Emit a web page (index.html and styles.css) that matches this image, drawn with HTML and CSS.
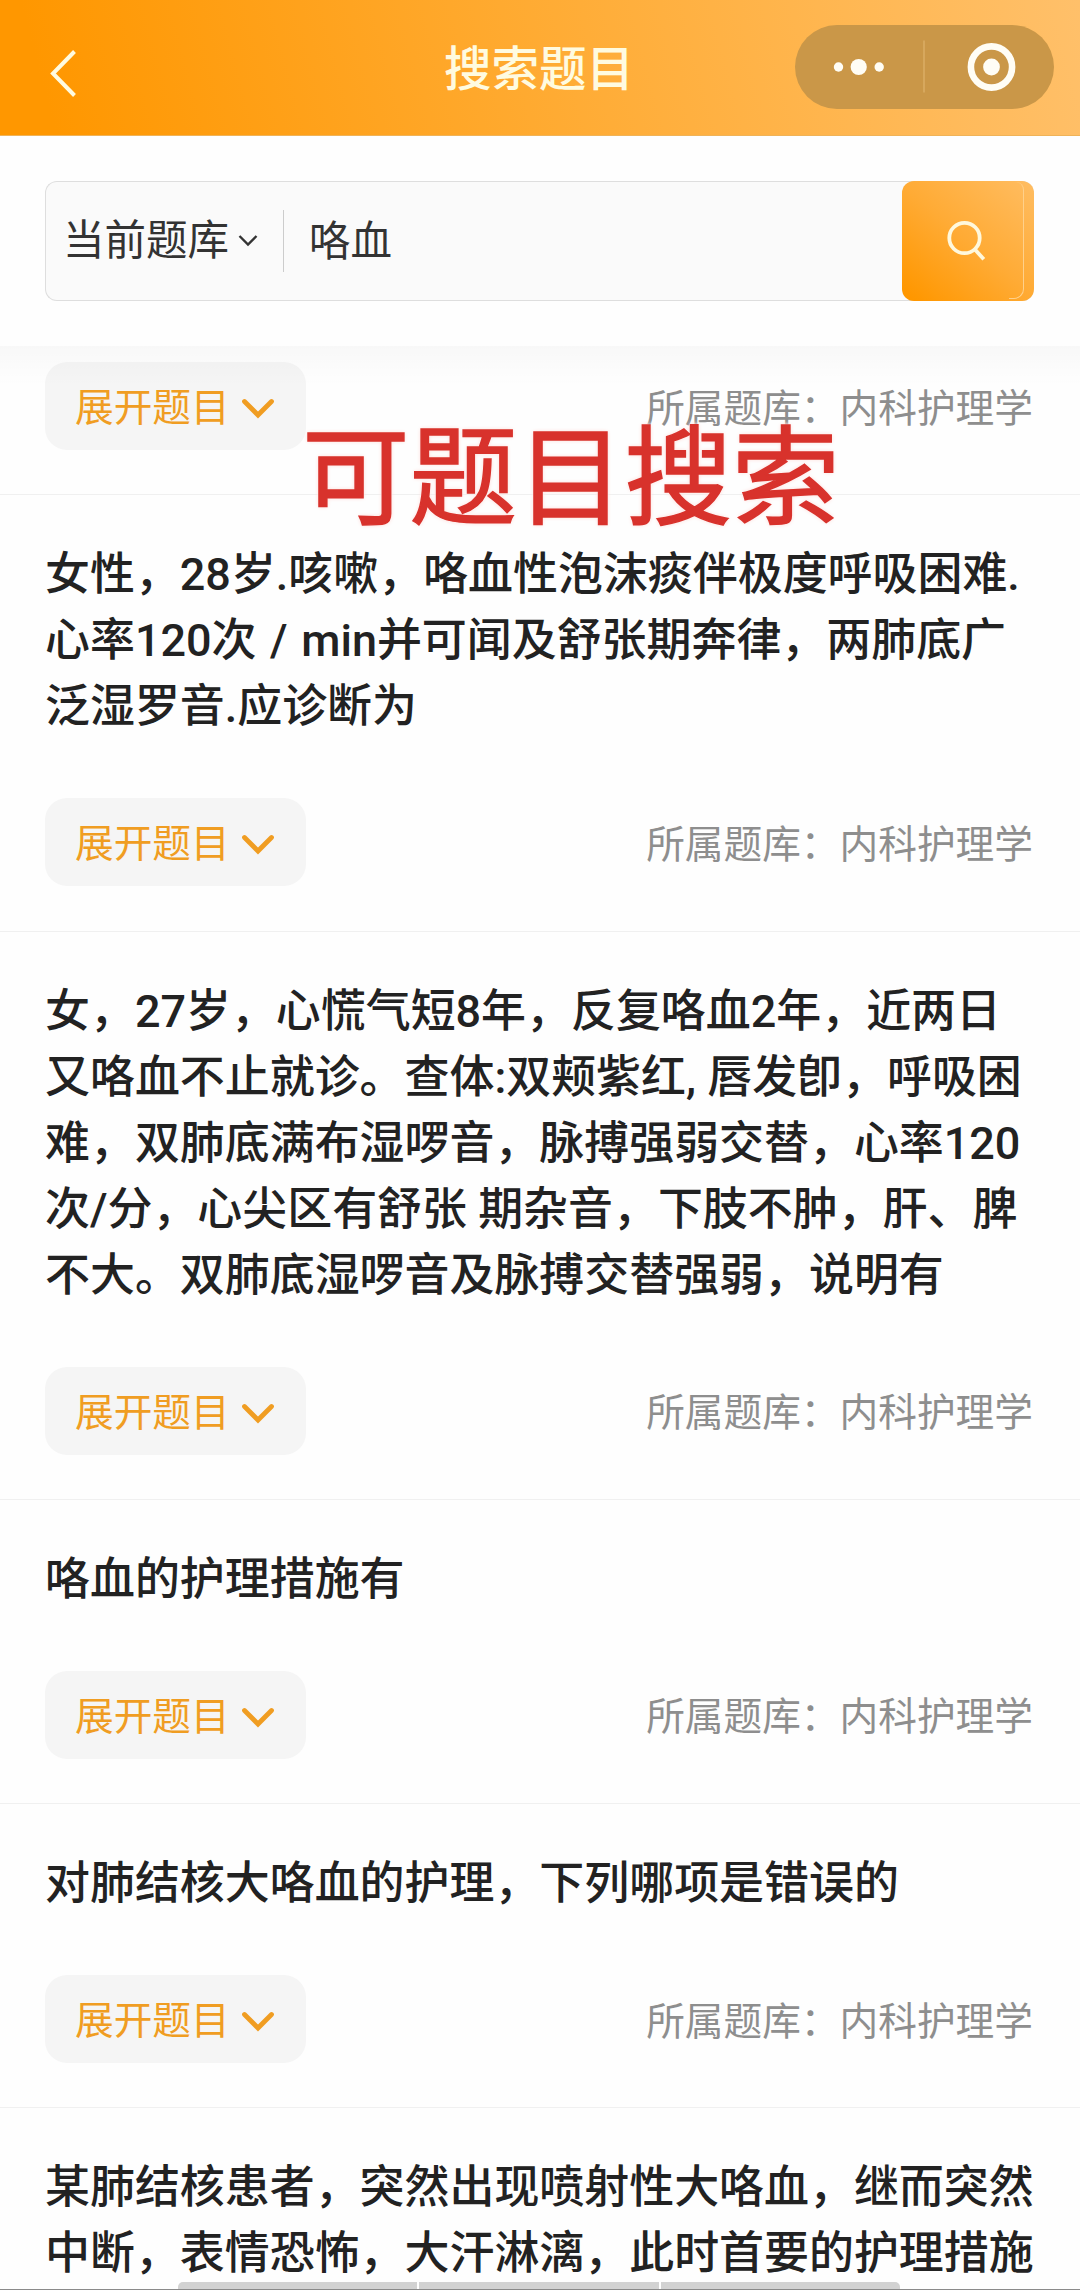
FILE: index.html
```html
<!DOCTYPE html>
<html lang="zh-CN">
<head>
<meta charset="utf-8">
<title>搜索题目</title>
<link rel="stylesheet" href="styles.css">
</head>
<body>
<svg width="0" height="0" class="defs">
  <symbol id="chev" viewBox="0 0 36 24"><path d="M4.500 5.500 18 19 31.500 5.500" fill="none" stroke="currentColor" stroke-width="4.800" stroke-linecap="round" stroke-linejoin="miter"/></symbol>
</svg>
<div class="page">
  <header class="header">
    <svg class="back" width="30" height="52" viewBox="0 0 30 52"><path d="M26.500 4.500 5 26.500 26.500 48.500" fill="none" stroke="currentColor" stroke-width="4"/></svg>
    <h1 class="title">搜索题目</h1>
    <div class="capsule">
      <svg width="259" height="84" viewBox="0 0 259 84">
        <g fill="#fffdf5"><circle cx="43.500" cy="42" r="4.700"/><circle cx="63.700" cy="42" r="8.100"/><circle cx="84.200" cy="42" r="4.700"/><circle cx="196.500" cy="42" r="8.400"/></g>
        <path d="M129 15.500v52" stroke="#e3b873" stroke-width="1"/>
        <circle cx="196.500" cy="42" r="20.600" fill="none" stroke="#fffdf5" stroke-width="6.600"/>
      </svg>
    </div>
  </header>
  <section class="search">
    <div class="scope"><span>当前题库</span><svg class="caret" width="20" height="14" viewBox="0 0 20 14"><path d="M1.500 2 10 10.500 18.500 2" fill="none" stroke="currentColor" stroke-width="2.400"/></svg></div>
    <div class="keyword">咯血</div>
    <div class="go">
      <svg width="44" height="44" viewBox="0 0 44 44"><g fill="none" stroke="#fff8dc" stroke-width="3.800"><circle cx="18.500" cy="19" r="15.200"/><path d="M28.500 30 37.800 40.300"/></g></svg>
    </div>
  </section>
  <main class="list">
    <article class="item cut">
      <div class="meta"><div class="expand">展开题目<svg class="chev"><use href="#chev"/></svg></div><div class="bank">所属题库：内科护理学</div></div>
    </article>
    <article class="item">
      <p class="question"><span>女性，28岁.咳嗽，咯血性泡沫痰伴极度呼吸困难.</span><span class="spaced">心率120次 / min并可闻及舒张期奔律，两肺底广</span><span>泛湿罗音.应诊断为</span></p>
      <div class="meta"><div class="expand">展开题目<svg class="chev"><use href="#chev"/></svg></div><div class="bank">所属题库：内科护理学</div></div>
    </article>
    <article class="item">
      <p class="question"><span>女，27岁，心慌气短8年，反复咯血2年，近两日</span><span>又咯血不止就诊。查体:双颊紫红, 唇发卽，呼吸困</span><span>难，双肺底满布湿啰音，脉搏强弱交替，心率120</span><span>次/分，心尖区有舒张 期杂音，下肢不肿，肝、脾</span><span>不大。双肺底湿啰音及脉搏交替强弱，说明有</span></p>
      <div class="meta"><div class="expand">展开题目<svg class="chev"><use href="#chev"/></svg></div><div class="bank">所属题库：内科护理学</div></div>
    </article>
    <article class="item">
      <p class="question"><span>咯血的护理措施有</span></p>
      <div class="meta"><div class="expand">展开题目<svg class="chev"><use href="#chev"/></svg></div><div class="bank">所属题库：内科护理学</div></div>
    </article>
    <article class="item">
      <p class="question"><span>对肺结核大咯血的护理，下列哪项是错误的</span></p>
      <div class="meta"><div class="expand">展开题目<svg class="chev"><use href="#chev"/></svg></div><div class="bank">所属题库：内科护理学</div></div>
    </article>
    <article class="item">
      <p class="question"><span>某肺结核患者，突然出现喷射性大咯血，继而突然</span><span>中断，表情恐怖，大汗淋漓，此时首要的护理措施</span></p>
    </article>
  </main>
  <div class="note">可题目搜索</div>
  <div class="dock"><i></i><i></i><i></i></div>
</div>
</body>
</html>
```

FILE: styles.css
```css
* { box-sizing: border-box; }
body { margin: 0; background: #fff; font-family: Roboto, "Noto Sans CJK SC", sans-serif; }
.defs { position: absolute; }
.page { position: relative; width: 1080px; height: 2290px; overflow: hidden; background: #fefefe; }

.header {
  height: 136px;
  padding: 0 26px 0 48px;
  display: grid;
  grid-template-columns: 1fr auto 1fr;
  align-items: center;
  background: linear-gradient(75deg, #ff9700 5%, #ffaa30 48%, #ffc06a 100%);
  border-bottom: 1px solid #efb359;
  color: #fffbe0;
}
.back { margin-top: 10px; }
.title { margin: 0; padding-top: 5px; font-size: 47.5px; line-height: 70px; font-weight: 500; transform: translateX(-12px); }
.capsule { justify-self: end; width: 259px; height: 84px; margin-bottom: 2px; border-radius: 42px; background: #ca9748; }
.capsule svg { display: block; }

.search {
  margin: 45px 46px 45px 45px;
  height: 120px;
  display: flex;
  align-items: center;
  border: 1px solid #dedede;
  border-right: 0;
  border-radius: 12px;
  background: #fafafa;
  color: #333;
  font-size: 41.5px;
  line-height: 60px;
}
.scope { height: 62px; width: 238px; padding-left: 17px; display: flex; align-items: center; gap: 9px; border-right: 1px solid #ccc; }
.keyword { flex: 1; padding: 2px 0 0 25px; }
.go {
  position: relative;
  width: 132px;
  height: 120px;
  border-radius: 12px;
  background: linear-gradient(40deg, #ff9700 5%, #ffab35 50%, #ffbd62 100%);
  display: flex;
  align-items: center;
  padding-left: 44px;
}
.go::after {
  content: "";
  position: absolute;
  top: 1px; right: 10px; bottom: 2px;
  width: 14px;
  border: solid #ffd08a;
  border-width: 0 1px 1px 0;
  border-radius: 0 8px 10px 0;
}

.list { position: relative; }
.list::before {
  content: "";
  position: absolute;
  inset: 0 0 auto 0;
  height: 40px;
  background: linear-gradient(rgba(0,0,0,.025), rgba(0,0,0,0));
}
.item { padding: 47px 45px 44.25px; border-bottom: 1px solid #f0f0f0; }
.item.cut { padding-top: 16px; }
.item:last-child { border: 0; }
.question { margin: 0 0 58px; color: #222; font-size: 44.95px; line-height: 66px; font-weight: 500; }
.question span { display: block; white-space: nowrap; }
.question .spaced { word-spacing: 2.500px; }
.meta { display: flex; align-items: center; justify-content: space-between; font-size: 38.7px; line-height: 56px; }
.expand {
  width: 261px;
  height: 88px;
  padding: 4px 0 0 30px;
  display: flex;
  align-items: center;
  gap: 10px;
  border-radius: 22px;
  background: #f5f5f5;
  color: #f09d22;
}
.chev { width: 36px; height: 24px; }
.bank { color: #8e8e8e; padding: 5px 2px 0 0; }

.note {
  position: absolute;
  left: 302px; top: 399px;
  font-size: 107.5px;
  line-height: 160px;
  font-weight: 400;
  color: #d8322c;
  white-space: nowrap;
  -webkit-text-stroke: 1.500px #d8322c;
  text-shadow: 0 0 3px #fff, 0 0 4px #ffc9c4, 0 0 5px #fff;
}
.dock {
  position: absolute;
  left: 0; bottom: 0;
  width: 100%;
  height: 8px;
  padding: 0 180px 0 178px;
  display: flex;
  gap: 2px;
  border-bottom: 1px solid #8a8a8a;
}
.dock i { flex: 1; background: #d2d2d2; }
.dock i:first-child { border-radius: 5px 0 0 0; }
.dock i:last-child { border-radius: 0 5px 0 0; }
```
